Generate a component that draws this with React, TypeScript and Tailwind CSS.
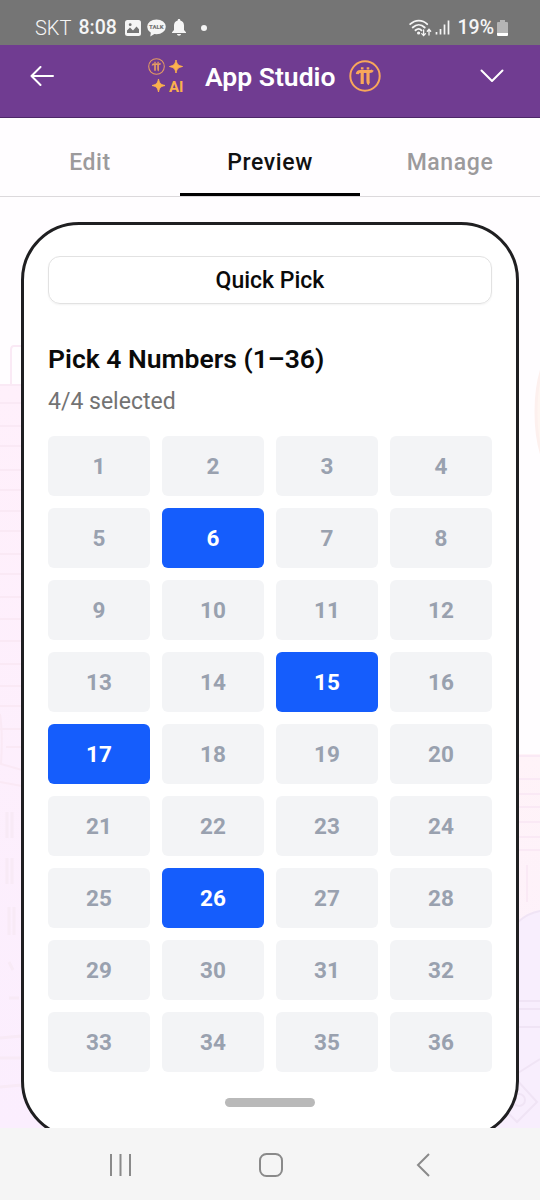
const TOTAL = 36
const selected = [6, 15, 17, 26]
const tabs = ['Edit', 'Preview', 'Manage']

const PiLogo = ({ className }: { className?: string }) => (
  <svg viewBox="0 0 32 32" className={className} fill="none" stroke="currentColor">
    <circle cx="16" cy="16" r="14.7" strokeWidth="2" />
    <path d="M8.3 14.2c.2-2 1.2-2.700 3-2.700h9.500c1.500 0 2.200-.4 2.700-1.400" strokeWidth="3" />
    <path d="M13.2 12v12M19 12v8.500c0 2 .3 2.800 1.300 3.200" strokeWidth="3.200" />
    <path d="M11.900 8.300h2.600M17.700 8.300h2.600" strokeWidth="2.300" />
  </svg>
)

const StudioLogo = () => (
  <div className="relative h-9 w-9 text-[#fbb14d]">
    <PiLogo className="h-[17px] w-[17px] text-[#e39b62]" />
    <svg viewBox="0 0 36 36" className="absolute inset-0 h-9 w-9" fill="currentColor" stroke="currentColor" strokeLinejoin="round">
      <path d="M28 2c1 4.500 2 5.500 6.500 6.500c-4.500 1-5.500 2-6.500 6.500c-1-4.500-2-5.500-6.500-6.500c4.500-1 5.500-2 6.500-6.500z" />
      <path d="M10.500 21c1 4.500 2 5.500 6.500 6.500c-4.500 1-5.500 2-6.500 6.500c-1-4.500-2-5.500-6.500-6.500c4.500-1 5.500-2 6.500-6.500z" />
    </svg>
    <span className="absolute -bottom-px left-[21px] text-[15px] leading-4 font-bold">AI</span>
  </div>
)

const StatusBar = () => (
  <div className="flex h-[45px] shrink-0 items-center bg-[#757575] pt-[10px] pr-[32px] pl-[35px] text-[#f5f5f5]">
    <span className="text-[20px] leading-6 font-light">SKT</span>
    <span className="ml-[7px] text-[19.500px] leading-6 font-medium">8:08</span>
    <svg viewBox="0 0 16 16" className="ml-2 h-4 w-4">
      <rect width="16" height="16" rx="2.500" fill="currentColor" />
      <path d="M2 13v-2.500l3-3 3 3 3.500-4 2.500 2.700V13z" fill="#757575" />
      <circle cx="5.200" cy="4.700" r="1.400" fill="#757575" />
    </svg>
    <div className="relative ml-[6px] h-[18px] w-[19px]">
      <svg viewBox="0 0 19 18" className="h-[18px] w-[19px]" fill="currentColor">
        <ellipse cx="9.500" cy="7.800" rx="9.300" ry="7.400" />
        <path d="M4 12l-.7 5.500L9 14z" />
      </svg>
      <span className="absolute inset-x-0 top-[4px] text-center text-[6px] leading-[8px] font-black text-[#757575]">TALK</span>
    </div>
    <svg viewBox="0 0 14 17" className="ml-[6px] h-[17px] w-[14px]" fill="currentColor">
      <path d="M7 0c.9 0 1.300.5 1.300 1.400C10.800 2 12 3.900 12 6.500V11l2 2.200v.8H0v-.8L2 11V6.500C2 3.900 3.200 2 5.700 1.400C5.700.5 6.100 0 7 0zM5 15h4c0 1-.9 1.700-2 1.700S5 16 5 15z" />
    </svg>
    <span className="ml-[15px] h-[6px] w-[6px] rounded-full bg-[#f5f5f5]" />

    <svg viewBox="0 0 23 18" className="ml-auto h-[18px] w-[23px]" fill="none" stroke="currentColor" strokeWidth="1.800" strokeLinecap="round">
      <path d="M1.200 5.200c5-4.800 12.300-4.800 17 0M3.700 8.500c3.800-3.500 8.500-3.500 12 0M6.500 11.300c2.200-1.900 4.200-1.900 6 0" />
      <circle cx="9.600" cy="14" r=".7" fill="currentColor" />
      <path d="M14.600 11v5.200M12.700 14.600l1.900 1.900 1.900-1.900M20 16v-5.500M18.300 12.200l1.700-1.900 1.700 1.900" strokeWidth="1.300" />
    </svg>
    <svg viewBox="0 0 15 15" className="ml-[3px] h-[15px] w-[15px]" stroke="currentColor" strokeWidth="1.700">
      <path d="M1.500 12v2.500M5.500 9v5.500M9.500 4.500v10M13.500.5v14" />
    </svg>
    <span className="ml-[7px] text-[19.500px] leading-6 font-medium">19%</span>
    <svg viewBox="0 0 11 16" className="ml-[3px] h-4 w-[11px]">
      <path d="M3 0h5v2h2q1 0 1 1v10H0V3q0-1 1-1h2z" fill="#b5b5b5" />
      <path d="M0 13h11v2q0 1-1 1H1q-1 0-1-1z" fill="#fff" />
    </svg>
  </div>
)

const Header = () => (
  <header className="flex h-[73px] shrink-0 items-center border-b border-[#4d2768] bg-[#703c91] pr-9 pb-[11px] pl-[30px] text-white">
    <svg viewBox="0 0 24 20" className="h-5 w-6" fill="none" stroke="currentColor" strokeWidth="2" strokeLinecap="round" strokeLinejoin="round">
      <path d="M23 10H1.500M10.500 1L1.500 10l9 9" />
    </svg>
    <div className="ml-[94px]">
      <StudioLogo />
    </div>
    <h1 className="ml-[21px] pt-[3px] text-[26.500px] leading-8 font-semibold">App Studio</h1>
    <PiLogo className="ml-[14px] h-8 w-8 text-[#f9a75a]" />
    <svg viewBox="0 0 24 14" className="ml-auto h-[14px] w-6" fill="none" stroke="currentColor" strokeWidth="2" strokeLinecap="round" strokeLinejoin="round">
      <path d="M1.500 1.500L12 12 22.500 1.500" />
    </svg>
  </header>
)

const Backdrop = () => (
  <svg viewBox="0 0 540 931" className="absolute inset-0 h-full w-full" fill="none">
    <defs>
      <linearGradient id="left" x1="0" y1="0" x2="0" y2="1">
        <stop offset="0" stopColor="#fff0fb" />
        <stop offset="1" stopColor="#fbeefe" />
      </linearGradient>
      <linearGradient id="right" x1="0" y1="0" x2="0" y2="1">
        <stop offset="0" stopColor="#fff3f8" />
        <stop offset="1" stopColor="#fcf0fc" />
      </linearGradient>
    </defs>
    <path d="M0 189h270v742H0z" fill="url(#left)" />
    <path d="M270 557h270v374H270z" fill="url(#right)" />
    <path d="M518 725q10-9 22-11v217h-70z" fill="#f8eefd" />
    <g stroke="#fae9f5" strokeWidth="2">
      <path d="M22 149h-8q-3 0-3 4v35M0 188h22M0 206h22M0 229h22M0 249h22M0 273h22M0 293h22M0 314h22M0 334h22M0 357h22M0 377h22M0 400h22M0 422h22M0 444h22M0 467h22M0 489h22M0 509h22M0 532h22M6 550h16" />
      <path d="M0 517q3 20 1 50l21 6M0 585l22 4" />
      <path d="M518 559h22M518 582h22M518 597h22M518 610h22M518 625h22M518 640h22M518 653h22M527 668v37" />
    </g>
    <g stroke="#f8eaf6" strokeWidth="3">
      <path d="M7 615v26M12 615v26M7 661v26M12 661v26M9 710v28M14 710v28M9 765l4 8M9 801h10M0 841l22-2v22H0M0 890l22-2" />
    </g>
    <g stroke="#f0e4f5" strokeWidth="2">
      <path d="M518 725q10-9 22-11M518 804h22M518 812h22M518 830h22M518 876l22-14M515 881l22 24-20 20-22-22z" />
      <circle cx="519" cy="903" r="6" />
    </g>
    <ellipse cx="562" cy="215" rx="26" ry="68" fill="#fff5f1" stroke="#fdf0ee" strokeWidth="3" />
  </svg>
)

const NumberGrid = () => (
  <div className="grid grid-cols-4 gap-3">
    {Array.from({ length: TOTAL }, (_, i) => i + 1).map((n) => (
      <button
        key={n}
        className={`h-[60px] rounded-md pt-px text-[22.500px] font-bold ${
          selected.includes(n) ? 'bg-[#155dfc] text-white' : 'bg-[#f3f4f6] text-[#99a1af]'
        }`}
      >
        {n}
      </button>
    ))}
  </div>
)

export default function App() {
  return (
    <div className="flex h-[1200px] w-[540px] flex-col overflow-hidden bg-[#fffdff] font-['Roboto',sans-serif]">
      <StatusBar />
      <Header />
      <nav className="grid h-[79px] shrink-0 grid-cols-3 border-b border-[#dcd9dc]">
        {tabs.map((tab) => (
          <button
            key={tab}
            className={`border-b-3 pt-[14px] text-[23px] leading-8 font-medium tracking-[0.6px] ${
              tab === 'Preview' ? 'border-black text-[#111]' : 'border-transparent text-[#9c9a9c]'
            }`}
          >
            {tab}
          </button>
        ))}
      </nav>

      <main className="relative h-[931px] shrink-0 overflow-hidden px-[21px] pt-[25px]">
        <Backdrop />
        <section className="relative h-[917px] rounded-[58px] border-[3px] border-[#1f1f21] bg-white px-6 pt-[31px]">
          <button className="h-12 w-full rounded-xl border-[1.5px] border-[#e2e2e2] pt-[2px] text-[23px] font-medium text-[#0a0a0a] shadow-xs">
            Quick Pick
          </button>
          <h2 className="mt-[39px] text-[26.500px] leading-8 font-semibold text-[#0a0a0a]">Pick 4 Numbers (1–36)</h2>
          <p className="mt-[11px] mb-[18px] text-[23px] leading-8 text-[#737373]">4/4 selected</p>
          <NumberGrid />
          <div className="mx-auto mt-[26px] h-[9px] w-[90px] rounded-full bg-[#b9b9b9]" />
        </section>
      </main>

      <footer className="flex h-[72px] shrink-0 items-center bg-[#f5f5f5] pt-[2px] pl-[109px] text-[#8a8a8a]">
        <svg viewBox="0 0 22 24" className="h-6 w-[22px]" fill="none" stroke="currentColor" strokeWidth="2">
          <path d="M2 1v22M11.500 1v22M21 1v22" />
        </svg>
        <svg viewBox="0 0 24 24" className="ml-[128px] h-6 w-6" fill="none" stroke="currentColor" strokeWidth="2">
          <rect x="1" y="1" width="22" height="22" rx="6.500" />
        </svg>
        <svg viewBox="0 0 14 24" className="ml-[133px] h-6 w-[14px]" fill="none" stroke="currentColor" strokeWidth="2">
          <path d="M13 1L2 12l11 11" />
        </svg>
      </footer>
    </div>
  )
}
